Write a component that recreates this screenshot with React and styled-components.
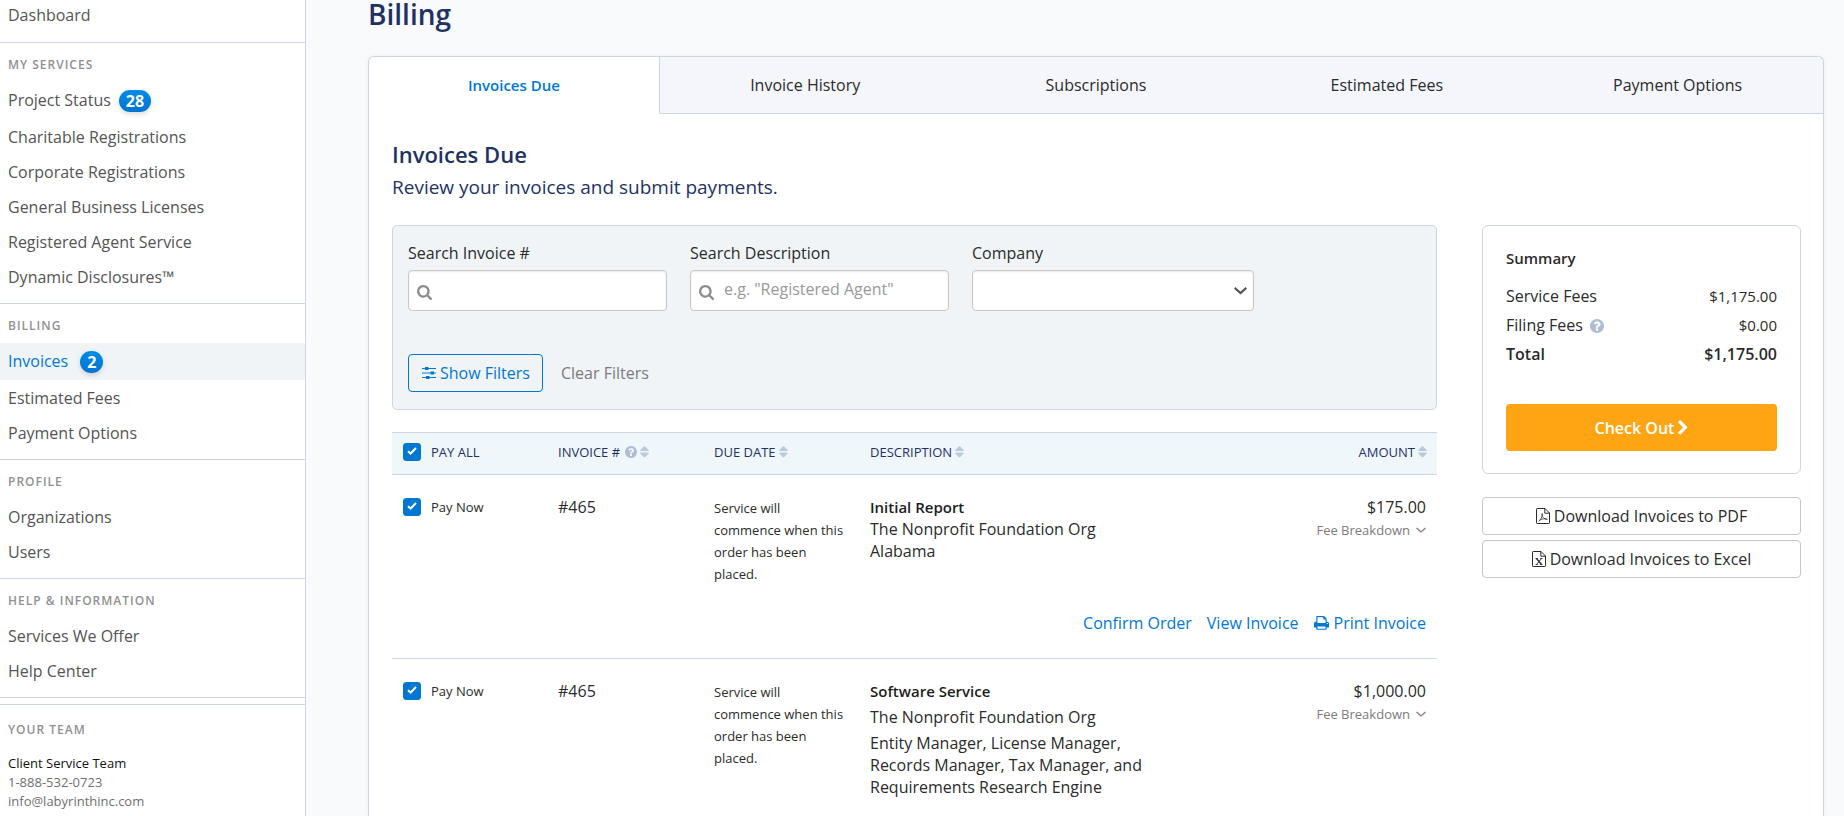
import React from 'react';
import styled, { createGlobalStyle, css } from 'styled-components';

const color = {
  blue: '#0078d2',
  navy: '#1f3264',
  line: '#cdd6e4',
  text: '#2b2b2b',
  nav: '#545454',
  muted: '#7b7b7b',
  pale: '#f0f4f7',
  sort: '#bccadd',
  help: '#afbdd4',
};

const GlobalStyle = createGlobalStyle`
  *, *::before, *::after { box-sizing: border-box; }
  body {
    margin: 0;
    background: #f9fafc;
    color: ${color.text};
    font-family: "Open Sans", "Noto Sans", sans-serif;
    font-size: 16px;
    line-height: 22px;
  }
  h1, h2, h3, p, ul { margin: 0; padding: 0; }
  ul { list-style: none; }
  a { text-decoration: none; color: ${color.blue}; }
  button, input, select { font: inherit; color: inherit; }
  button { cursor: pointer; }
  svg { display: block; flex: none; }
`;

/* ---------- icons ---------- */

const glyphs = {
  search:
    'M1216 832q0-185-131.5-316.5t-316.5-131.5-316.5 131.5-131.5 316.5 131.5 316.5 316.5 131.5 316.5-131.5 131.5-316.5zm512 832q0 52-38 90t-90 38q-54 0-90-38l-343-342q-179 124-399 124-143 0-273.5-55.5t-225-150-150-225-55.5-273.5 55.5-273.5 150-225 225-150 273.5-55.5 273.5 55.5 225 150 150 225 55.5 273.5q0 220-124 399l343 343q37 37 37 90z',
  help:
    'M1024 1376v-192q0-14-9-23t-23-9h-192q-14 0-23 9t-9 23v192q0 14 9 23t23 9h192q14 0 23-9t9-23zm256-672q0-88-55.5-163t-138.5-116-170-41q-243 0-371 213-15 24 8 42l132 100q7 6 19 6 16 0 25-12 53-68 86-92 34-24 86-24 48 0 85.5 26t37.5 59q0 38-20 61t-68 45q-63 28-115.5 86.5t-52.5 125.5v36q0 14 9 23t23 9h192q14 0 23-9t9-23q0-19 21.5-49.5t54.5-49.5q32-18 49-28.5t46-35 44.5-48 28-60.5 12.5-81zm384 192q0 209-103 385.5t-279.5 279.5-385.5 103-385.5-103-279.5-279.5-103-385.5 103-385.5 279.5-279.5 385.5-103 385.5 103 279.5 279.5 103 385.5z',
  print:
    'M448 1536h896v-256h-896v256zm0-640h896v-384h-160q-40 0-68-28t-28-68v-160h-640v640zm1152 64q0-26-19-45t-45-19-45 19-19 45 19 45 45 19 45-19 19-45zm128 0v416q0 13-9.5 22.5t-22.5 9.5h-224v160q0 40-28 68t-68 28h-960q-40 0-68-28t-28-68v-160h-224q-13 0-22.5-9.5t-9.5-22.5v-416q0-79 56.5-135.5t135.5-56.5h64v-544q0-40 28-68t68-28h672q40 0 88 20t76 48l152 152q28 28 48 76t20 88v256h64q79 0 135.5 56.5t56.5 135.5z',
  chevron:
    'M1363 877l-742 742q-19 19-45 19t-45-19l-166-166q-19-19-19-45t19-45l531-531-531-531q-19-19-19-45t19-45l166-166q19-19 45-19t45 19l742 742q19 19 19 45t-19 45z',
};

const Glyph = ({ name, size, box = '0 0 1792 1792', width = size }) => (
  <svg width={width} height={size} viewBox={box} fill="currentColor" aria-hidden="true">
    <path d={glyphs[name]} />
  </svg>
);

const FileIcon = ({ children }) => (
  <svg width="14" height="16" viewBox="0 0 14 16" fill="none" stroke="currentColor" aria-hidden="true">
    <path d="M.5 1.2q0-.7.7-.7H9l4.500 4.500v9.800q0 .7-.7.7H1.200q-.7 0-.7-.7zM8.800.5v4.700h4.700" />
    {children}
  </svg>
);
const PdfIcon = () => (
  <FileIcon>
    <path strokeWidth=".8" d="M2.600 13.300c1.600-.8 3.700-4.500 4-7 .1-1-.9-1-.8 0 .3 2.200 1.800 4.200 3.800 5 1.500.6 2.100 0 1.500-.4-1.500-.8-5.700.2-7.300 1.200" />
  </FileIcon>
);
const ExcelIcon = () => (
  <FileIcon>
    <path d="M4.500 7.500l5 6" strokeWidth="1.400" />
    <path d="M9.500 7.500l-5 6M3.500 7.500h2.300M8.200 7.500h2.300M3.500 13.500h2.300M8.200 13.500h2.300" strokeWidth=".9" />
  </FileIcon>
);
const SlidersIcon = () => (
  <svg width="14" height="14" viewBox="0 0 14 14" fill="currentColor" aria-hidden="true">
    <path d="M0 2h14v1H0zM0 6.500h14v1H0zM0 11h14v1H0z" />
    <path d="M3 1h3.500v3H3zM8.500 5.500H12v3H8.500zM4 10h3.500v3H4z" />
  </svg>
);
const SortIcon = () => (
  <svg width="9" height="12" viewBox="0 0 8 12" preserveAspectRatio="none" fill={color.sort} aria-hidden="true">
    <path d="M3.300.5q.7-.7 1.400 0l3 3.400q.6 1.100-.4 1.100H.7q-1 0-.4-1.100zM3.300 11q.7.700 1.400 0l3-3.400q.6-1.100-.4-1.100H.7q-1 0-.4 1.100z" />
  </svg>
);
const CaretIcon = ({ width = 10, weight = 1.2 }) => (
  <svg width={width} height={width} viewBox="0 0 10 10" fill="none" stroke="currentColor" strokeWidth={weight} aria-hidden="true">
    <path d="M.5 3L5 7 9.500 3" />
  </svg>
);

/* ---------- sidebar ---------- */

const Page = styled.div`
  display: flex;
  min-height: 100vh;
`;
const Sidebar = styled.nav`
  flex: none;
  width: 306px;
  background: #fff;
  border-right: 1px solid ${color.line};
`;
const NavSection = styled.section`
  padding-bottom: ${(p) => (p.$top ? 13 : 9)}px;
  border-bottom: 1px solid ${color.line};
`;
const NavHeading = styled.h3`
  padding: 13px 8px 8px;
  color: #8f9092;
  font-size: 12px;
  line-height: 18px;
  font-weight: 600;
  letter-spacing: 1px;
`;
const navHeights = { short: 29, regular: 35, tall: 37 };
const NavLink = styled.a`
  display: flex;
  align-items: center;
  height: ${(p) => navHeights[p.$size || 'regular']}px;
  padding: 0 8px ${(p) => (p.$size === 'tall' ? 2 : 0)}px;
  color: ${(p) => (p.$active ? color.blue : color.nav)};
  background: ${(p) => (p.$active ? color.pale : 'transparent')};
`;
const Badge = styled.span`
  margin: 2px 0 0 ${(p) => (p.$wide ? 8 : 12)}px;
  padding: 0 7px;
  border-radius: 11px;
  background: linear-gradient(#008cea, #0074cf);
  box-shadow: 0 2px 5px rgba(0, 0, 0, 0.15);
  color: #fff;
  line-height: 22px;
  font-weight: 700;
`;
const Team = styled.section`
  margin-top: 6px;
  padding: 3px 0 5px;
  border-top: 1px solid ${color.line};
`;
const TeamCard = styled.address`
  display: flex;
  flex-direction: column;
  padding: 7px 8px 0;
  font-size: 13px;
  font-style: normal;
  line-height: 19px;
  color: #6f6f6f;
`;
const TeamName = styled.strong`
  color: #111;
  font-weight: 500;
`;
const TeamLink = styled.a`
  color: inherit;
`;

/* ---------- content ---------- */

const Main = styled.main`
  flex: 1;
  min-width: 0;
  display: flex;
  flex-direction: column;
  padding: 0 20px 0 62px;
`;
const PageTitle = styled.h1`
  margin-bottom: 27px;
  color: ${color.navy};
  font-size: 28px;
  line-height: 29px;
  font-weight: 600;
`;
const Panel = styled.div`
  flex: 1;
  background: #fff;
  border: 1px solid ${color.line};
  border-bottom: 0;
  border-radius: 6px 6px 0 0;
  box-shadow: 0 0 4px rgba(31, 50, 100, 0.06);
`;
const Tabs = styled.div`
  display: grid;
  grid-template-columns: repeat(5, 1fr);
`;
const Tab = styled.button`
  height: 57px;
  padding: 0 0 1px;
  border: 0;
  border-bottom: 1px solid ${color.line};
  background: #f4f6fb;
  &:last-child { border-top-right-radius: 6px; }
  ${(p) =>
    p.$active &&
    css`
      border-bottom-color: #fff;
      border-right: 1px solid ${color.line};
      border-top-left-radius: 6px;
      background: #fff;
      color: ${color.blue};
      font-size: 15px;
      font-weight: 600;
    `}
`;
const Body = styled.div`
  padding: 27px 22px 0 23px;
`;
const Title = styled.h2`
  color: ${color.navy};
  font-size: 22px;
  line-height: 26px;
  font-weight: 600;
`;
const Intro = styled.p`
  margin: 7px 0 25px;
  color: ${color.navy};
  font-size: 19px;
  line-height: 26px;
`;
const Columns = styled.div`
  display: grid;
  grid-template-columns: minmax(0, 1fr) 319px;
  column-gap: 45px;
  align-items: start;
`;

/* ---------- filters ---------- */

const Filters = styled.form`
  margin-bottom: 22px;
  padding: 15px 15px 17px;
  border: 1px solid ${color.line};
  border-radius: 5px;
  background: ${color.pale};
`;
const Fields = styled.div`
  display: grid;
  grid-template-columns: 259fr 259fr 282fr 144fr;
  column-gap: 23px;
  margin-bottom: 43px;
`;
const Field = styled.div`
  display: flex;
  flex-direction: column;
  gap: 5px;
`;
const FieldLabel = styled.label`
  line-height: 24px;
`;
const Control = styled.div`
  position: relative;
`;
const box = css`
  display: block;
  width: 100%;
  height: 41px;
  border: 1px solid #c8c8c8;
  border-radius: 4px;
  background: #fff;
  box-shadow: inset 0 1px 2px rgba(0, 0, 0, 0.08);
`;
const TextInput = styled.input`
  ${box}
  padding: 0 10px 3px 33px;
  &::placeholder { color: #999; opacity: 1; }
`;
const Select = styled.select`
  ${box}
  appearance: none;
  padding: 0 30px 0 10px;
`;
const SearchMark = styled.span`
  position: absolute;
  left: 9px;
  top: 15px;
  color: #8c8c8c;
  pointer-events: none;
`;
const SelectMark = styled.span`
  position: absolute;
  right: 7px;
  top: 14px;
  color: #555;
  pointer-events: none;
`;
const FilterActions = styled.div`
  display: flex;
  align-items: center;
  gap: 18px;
`;
const OutlineButton = styled.button`
  display: flex;
  align-items: center;
  gap: 4px;
  height: 38px;
  padding: 0 12px 1px 13px;
  border: 1px solid ${color.blue};
  border-radius: 4px;
  background: transparent;
  color: ${color.blue};
`;
const PlainButton = styled.button`
  padding: 0 0 1px;
  border: 0;
  background: none;
  color: ${color.muted};
`;

/* ---------- table ---------- */

const Table = styled.table`
  width: 100%;
  border-collapse: separate;
  border-spacing: 0;
  table-layout: fixed;
`;
const Col = styled.col`
  width: ${(p) => p.$width}px;
`;
const Th = styled.th`
  height: 43px;
  padding: 0 10px 3px ${(p) => (p.$first ? 11 : 10)}px;
  border: 1px solid ${color.line};
  border-width: 1px 0;
  background: #eff7fb;
  color: ${color.navy};
  font-size: 13px;
  font-weight: 500;
  text-align: left;
`;
const SortButton = styled.button`
  display: flex;
  align-items: center;
  gap: 3px;
  margin-left: ${(p) => (p.$end ? 'auto' : 0)};
  padding: 0;
  border: 0;
  background: none;
  white-space: nowrap;
`;
const Help = styled.span`
  display: inline-flex;
  margin-left: ${(p) => p.$gap}px;
  color: ${color.help};
`;
const Td = styled.td`
  padding: 21px 11px 0 ${(p) => (p.$first ? 11 : 10)}px;
  vertical-align: top;
  text-align: ${(p) => (p.$end ? 'right' : 'left')};
`;
const ActionsCell = styled.td`
  padding: 27px 11px 24px;
  border-bottom: 1px solid ${color.line};
`;
const Actions = styled.div`
  display: flex;
  justify-content: flex-end;
  gap: 15px;
`;
const ActionLink = styled.a`
  display: flex;
  align-items: center;
  gap: 5px;
`;
const PayLabel = styled.label`
  display: flex;
  align-items: center;
  gap: 10px;
  font-size: 13px;
  font-weight: 500;
`;
const Tick = styled.span`
  position: relative;
  display: flex;
  color: #fff;
  svg {
    position: absolute;
    inset: 4px;
    pointer-events: none;
  }
`;
const TickInput = styled.input`
  appearance: none;
  width: 18px;
  height: 18px;
  margin: 0;
  border: 1px solid ${color.blue};
  border-radius: 3px;
  background: #fff;
  &:checked { background: ${color.blue}; }
`;
const Small = styled.div`
  padding-top: 1px;
  font-size: 13px;
`;
const Name = styled.strong`
  font-size: 15px;
  font-weight: 600;
  color: #1d1d1d;
`;
const Lines = styled.div`
  display: flex;
  flex-direction: column;
  gap: ${(p) => p.$gap}px;
  padding-bottom: ${(p) => (p.$last ? 18 : 0)}px;
`;
const Breakdown = styled.button`
  display: flex;
  align-items: center;
  gap: 6px;
  margin: 1px 0 0 auto;
  padding: 0;
  border: 0;
  background: none;
  color: ${color.muted};
  font-size: 13px;
`;

/* ---------- summary ---------- */

const Summary = styled.section`
  padding: 20px 23px 22px;
  border: 1px solid ${color.line};
  border-radius: 6px;
`;
const SummaryTitle = styled.h3`
  margin-bottom: 12px;
  font-size: 15px;
  line-height: 24px;
  font-weight: 600;
`;
const SummaryRow = styled.div`
  display: flex;
  align-items: center;
  justify-content: space-between;
  line-height: 29px;
  font-weight: ${(p) => (p.$total ? 600 : 400)};
`;
const SummaryLabel = styled.span`
  display: flex;
  align-items: center;
`;
const Amount = styled.span`
  font-size: ${(p) => (p.$total ? 16 : 15)}px;
`;
const CheckOut = styled.button`
  display: flex;
  align-items: center;
  justify-content: center;
  gap: 4px;
  width: 100%;
  height: 47px;
  margin-top: 35px;
  border: 0;
  border-radius: 4px;
  background: #ffa514;
  color: #fff;
  font-weight: 600;
`;
const Downloads = styled.div`
  display: flex;
  flex-direction: column;
  gap: 5px;
  margin-top: 23px;
`;
const DownloadButton = styled.button`
  display: flex;
  align-items: center;
  justify-content: center;
  gap: 4px;
  height: 38px;
  border: 1px solid #c6c6c6;
  border-radius: 4px;
  background: #fff;
`;

/* ---------- data ---------- */

const navSections = [
  {
    title: 'MY SERVICES',
    items: [
      { label: 'Project Status', badge: 28 },
      { label: 'Charitable Registrations' },
      { label: 'Corporate Registrations' },
      { label: 'General Business Licenses' },
      { label: 'Registered Agent Service' },
      { label: 'Dynamic Disclosures™' },
    ],
  },
  {
    title: 'BILLING',
    items: [
      { label: 'Invoices', badge: 2, active: true },
      { label: 'Estimated Fees' },
      { label: 'Payment Options' },
    ],
  },
  { title: 'PROFILE', items: [{ label: 'Organizations' }, { label: 'Users' }] },
  { title: 'HELP & INFORMATION', items: [{ label: 'Services We Offer' }, { label: 'Help Center' }] },
];

const tabs = ['Invoices Due', 'Invoice History', 'Subscriptions', 'Estimated Fees', 'Payment Options'];

const invoices = [
  {
    number: '#465',
    name: 'Initial Report',
    lines: ['The Nonprofit Foundation Org', 'Alabama'],
    amount: '$175.00',
    gap: 0,
    actions: true,
  },
  {
    number: '#465',
    name: 'Software Service',
    lines: [
      'The Nonprofit Foundation Org',
      'Entity Manager, License Manager, Records Manager, Tax Manager, and Requirements Research Engine',
    ],
    amount: '$1,000.00',
    gap: 4,
  },
];

const PayBox = ({ label }) => (
  <PayLabel>
    <Tick>
      <TickInput type="checkbox" defaultChecked />
      <svg width="10" height="8" viewBox="0 0 10 8" fill="none" stroke="currentColor" strokeWidth="2" aria-hidden="true">
        <path d="M1 4.200l2.600 2.300L9 1" />
      </svg>
    </Tick>
    {label}
  </PayLabel>
);

const Sort = ({ children, end }) => (
  <SortButton type="button" $end={end}>
    {children}
    <SortIcon />
  </SortButton>
);

const HelpMark = ({ size, gap }) => (
  <Help $gap={gap}>
    <Glyph name="help" size={size} box="128 128 1536 1536" />
  </Help>
);

export default function App() {
  return (
    <>
      <GlobalStyle />
      <Page>
        <Sidebar>
          <NavSection $top>
            <NavLink href="#dashboard" $size="short">Dashboard</NavLink>
          </NavSection>
          {navSections.map((section) => (
            <NavSection key={section.title}>
              <NavHeading>{section.title}</NavHeading>
              <ul>
                {section.items.map((item) => (
                  <li key={item.label}>
                    <NavLink href="#nav" $size={item.badge ? 'tall' : 'regular'} $active={item.active}>
                      {item.label}
                      {item.badge && <Badge $wide={item.badge > 9}>{item.badge}</Badge>}
                    </NavLink>
                  </li>
                ))}
              </ul>
            </NavSection>
          ))}
          <Team>
            <NavHeading>YOUR TEAM</NavHeading>
            <TeamCard>
              <TeamName>Client Service Team</TeamName>
              <TeamLink href="tel:1-888-532-0723">1-888-532-0723</TeamLink>
              <TeamLink href="mailto:info@labyrinthinc.com">info@labyrinthinc.com</TeamLink>
            </TeamCard>
          </Team>
        </Sidebar>

        <Main>
          <PageTitle>Billing</PageTitle>
          <Panel>
            <Tabs role="tablist">
              {tabs.map((tab, i) => (
                <Tab key={tab} type="button" role="tab" aria-selected={i === 0} $active={i === 0}>
                  {tab}
                </Tab>
              ))}
            </Tabs>
            <Body>
              <Title>Invoices Due</Title>
              <Intro>Review your invoices and submit payments.</Intro>
              <Columns>
                <div>
                  <Filters>
                    <Fields>
                      <Field>
                        <FieldLabel htmlFor="invoice">Search Invoice #</FieldLabel>
                        <Control>
                          <TextInput id="invoice" type="text" />
                          <SearchMark><Glyph name="search" size={15} box="64 128 1664 1664" /></SearchMark>
                        </Control>
                      </Field>
                      <Field>
                        <FieldLabel htmlFor="description">Search Description</FieldLabel>
                        <Control>
                          <TextInput id="description" type="text" placeholder={'e.g. "Registered Agent"'} />
                          <SearchMark><Glyph name="search" size={15} box="64 128 1664 1664" /></SearchMark>
                        </Control>
                      </Field>
                      <Field>
                        <FieldLabel htmlFor="company">Company</FieldLabel>
                        <Control>
                          <Select id="company" defaultValue="">
                            <option value="" />
                          </Select>
                          <SelectMark><CaretIcon width={13} weight={1.6} /></SelectMark>
                        </Control>
                      </Field>
                    </Fields>
                    <FilterActions>
                      <OutlineButton type="button"><SlidersIcon />Show Filters</OutlineButton>
                      <PlainButton type="reset">Clear Filters</PlainButton>
                    </FilterActions>
                  </Filters>

                  <Table>
                    <colgroup>
                      <Col $width={156} />
                      <Col $width={156} />
                      <Col $width={156} />
                      <Col $width={310} />
                      <col />
                    </colgroup>
                    <thead>
                      <tr>
                        <Th $first><PayBox label="PAY ALL" /></Th>
                        <Th><Sort>INVOICE # <HelpMark size={12} gap={2} /></Sort></Th>
                        <Th><Sort>DUE DATE</Sort></Th>
                        <Th><Sort>DESCRIPTION</Sort></Th>
                        <Th><Sort end>AMOUNT</Sort></Th>
                      </tr>
                    </thead>
                    <tbody>
                      {invoices.map((inv) => (
                        <React.Fragment key={inv.name}>
                          <tr>
                            <Td $first><PayBox label="Pay Now" /></Td>
                            <Td>{inv.number}</Td>
                            <Td><Small>Service will commence when this order has been placed.</Small></Td>
                            <Td>
                              <Lines $gap={inv.gap} $last={!inv.actions}>
                                <Name>{inv.name}</Name>
                                {inv.lines.map((line) => <p key={line}>{line}</p>)}
                              </Lines>
                            </Td>
                            <Td $end>
                              {inv.amount}
                              <Breakdown type="button">Fee Breakdown <CaretIcon /></Breakdown>
                            </Td>
                          </tr>
                          {inv.actions && (
                            <tr>
                              <ActionsCell colSpan={5}>
                                <Actions>
                                  <ActionLink href="#confirm">Confirm Order</ActionLink>
                                  <ActionLink href="#view">View Invoice</ActionLink>
                                  <ActionLink href="#print">
                                    <Glyph name="print" size={15} box="64 128 1664 1664" />
                                    Print Invoice
                                  </ActionLink>
                                </Actions>
                              </ActionsCell>
                            </tr>
                          )}
                        </React.Fragment>
                      ))}
                    </tbody>
                  </Table>
                </div>

                <aside>
                  <Summary>
                    <SummaryTitle>Summary</SummaryTitle>
                    <SummaryRow>
                      <SummaryLabel>Service Fees</SummaryLabel>
                      <Amount>$1,175.00</Amount>
                    </SummaryRow>
                    <SummaryRow>
                      <SummaryLabel>Filing Fees<HelpMark size={14} gap={7} /></SummaryLabel>
                      <Amount>$0.00</Amount>
                    </SummaryRow>
                    <SummaryRow $total>
                      <SummaryLabel>Total</SummaryLabel>
                      <Amount $total>$1,175.00</Amount>
                    </SummaryRow>
                    <CheckOut type="button">
                      Check Out
                      <Glyph name="chevron" size={16} width={10} box="346 88 1100 1616" />
                    </CheckOut>
                  </Summary>
                  <Downloads>
                    <DownloadButton type="button"><PdfIcon />Download Invoices to PDF</DownloadButton>
                    <DownloadButton type="button"><ExcelIcon />Download Invoices to Excel</DownloadButton>
                  </Downloads>
                </aside>
              </Columns>
            </Body>
          </Panel>
        </Main>
      </Page>
    </>
  );
}
